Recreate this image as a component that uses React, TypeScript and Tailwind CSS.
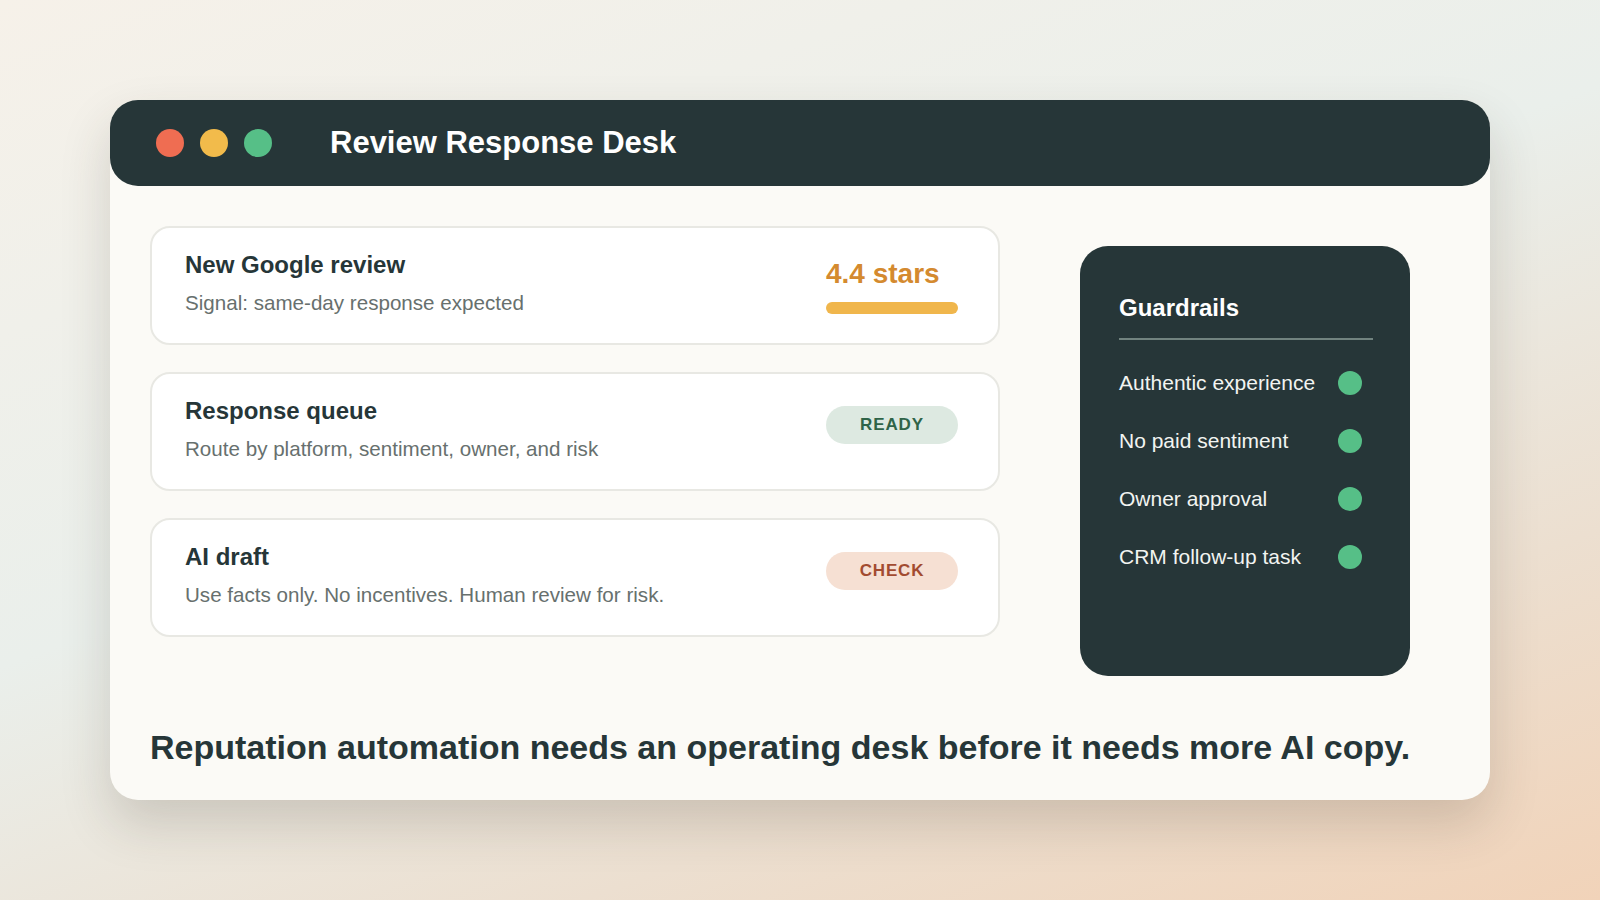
export default function App() {
  const rows = ["Authentic experience", "No paid sentiment", "Owner approval", "CRM follow-up task"];
  return (
    <div className="w-[1600px] h-[900px] overflow-hidden bg-[linear-gradient(160deg,#f6f1e9_0%,#eaefeb_45%,#ecdfd0_75%,#f1d3b9_100%)] pt-[100px] pl-[110px]" style={{ fontFamily: '"Liberation Sans", Arial, sans-serif' }}>
      <div className="w-[1380px] h-[700px] rounded-[28px] bg-[#fbfaf6] shadow-[0_24px_50px_rgba(60,50,40,0.18)] flex flex-col">
        <div className="h-[86px] rounded-[28px] bg-[#263638] flex items-center px-[46px]">
          <div className="flex gap-[16px]">
            <span className="w-[28px] h-[28px] rounded-full bg-[#ef6d52]" />
            <span className="w-[28px] h-[28px] rounded-full bg-[#f2bb4b]" />
            <span className="w-[28px] h-[28px] rounded-full bg-[#56bf87]" />
          </div>
          <div className="ml-[58px] text-white text-[31px] font-bold">Review Response Desk</div>
        </div>
        <div className="flex pl-[40px] pt-[40px]">
          <div className="w-[850px] flex flex-col gap-[27px]">
            <Card title="New Google review" sub="Signal: same-day response expected">
              <div className="w-[132px] flex flex-col items-start">
                <div className="text-[28px] font-bold text-[#d48a2f] -mt-[4px]">4.4 stars</div>
                <div className="mt-[7px] w-[132px] h-[12px] rounded-full bg-[#f0b64c]" />
              </div>
            </Card>
            <Card title="Response queue" sub="Route by platform, sentiment, owner, and risk">
              <div className="w-[132px] h-[38px] -mt-[14px] rounded-full bg-[#dde9e1] text-[#2f6448] text-[17px] font-bold tracking-wider flex items-center justify-center">READY</div>
            </Card>
            <Card title="AI draft" sub="Use facts only. No incentives. Human review for risk.">
              <div className="w-[132px] h-[38px] -mt-[14px] rounded-full bg-[#f6e0d3] text-[#a24b30] text-[17px] font-bold tracking-wider flex items-center justify-center">CHECK</div>
            </Card>
          </div>
          <div className="ml-[80px] mt-[20px] w-[330px] h-[430px] rounded-[28px] bg-[#263638] px-[39px] pt-[44px]">
            <div className="text-white text-[24px] font-bold">Guardrails</div>
            <div className="mt-[12px] h-[2px] w-[254px] bg-[#71837f]" />
            <div className="mt-[31px] flex flex-col gap-[34px]">
              {rows.map((r) => (
                <div key={r} className="flex items-center justify-between w-[243px] h-[24px]">
                  <span className="text-[#f2f4f1] text-[21px]">{r}</span>
                  <span className="w-[24px] h-[24px] rounded-full bg-[#56bf87]" />
                </div>
              ))}
            </div>
          </div>
        </div>
        <div className="pl-[40px] mt-[46px] text-[34px] font-bold text-[#263638]">Reputation automation needs an operating desk before it needs more AI copy.</div>
      </div>
    </div>
  );
}

function Card({ title, sub, children }: { title: string; sub: string; children: React.ReactNode }) {
  return (
    <div className="h-[119px] rounded-[20px] border-2 border-[#e8e8e3] bg-white flex items-center justify-between pl-[33px] pr-[40px]">
      <div className="-mt-[6px]">
        <div className="text-[24px] font-bold text-[#263638]">{title}</div>
        <div className="mt-[5px] text-[20.6px] text-[#67706e]">{sub}</div>
      </div>
      {children}
    </div>
  );
}
